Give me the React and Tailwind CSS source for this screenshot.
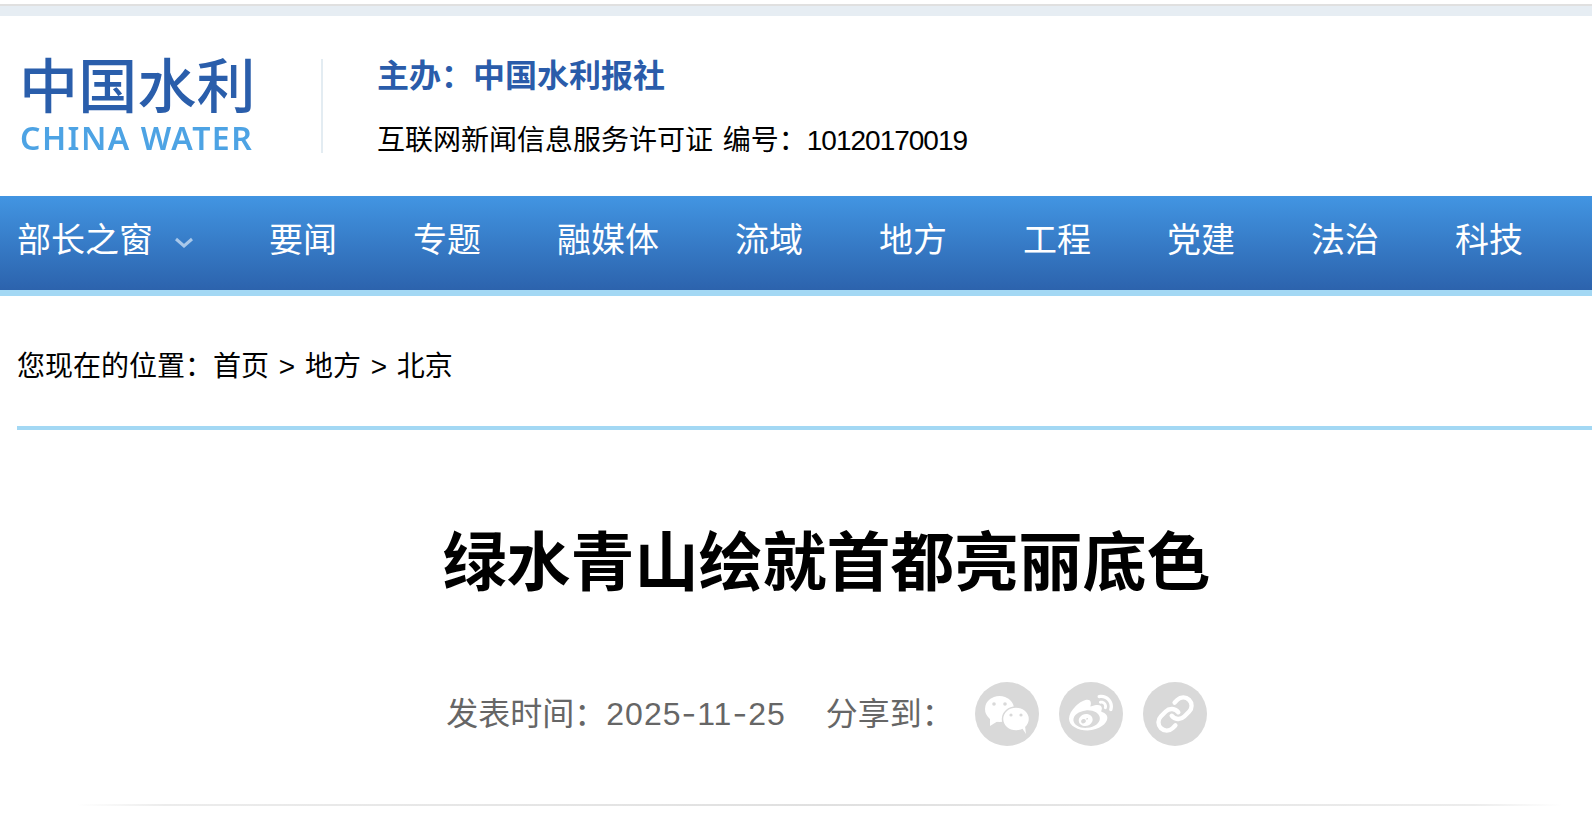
import React from "react";
import { Link } from "lucide-react";
import { FaWeibo } from "react-icons/fa";

const FONT = "font-['Liberation_Sans','Noto_Sans_CJK_SC',sans-serif]";
const NAV = ["要闻", "专题", "融媒体", "流域", "地方", "工程", "党建", "法治", "科技"];

function Logo() {
  return (
    <div className="w-[236px] h-[92px] flex flex-col blur-[0.4px]">
      <div className="h-[46px] leading-[46px] -ml-[1px] text-[59px] tracking-[0.2px] font-medium text-[#2a5eab] whitespace-nowrap font-['Noto_Sans_CJK_SC',sans-serif]">中国水利</div>
      <div className="mt-[19px] h-[26px] leading-[26px] text-[32px] tracking-[1.5px] font-semibold text-[#4da3e4] whitespace-nowrap font-['Noto_Sans',sans-serif]">CHINA WATER</div>
    </div>
  );
}

function WeChat() {
  return (
    <svg width="64" height="64" viewBox="0 0 64 64" className="block blur-[0.5px]">
      <ellipse cx="24.5" cy="27" rx="14.5" ry="13" fill="#fff" />
      <path d="M15 36l0 8 8-5z" fill="#fff" />
      <circle cx="19" cy="22" r="1.8" fill="#d9d9d9" />
      <circle cx="30" cy="22" r="1.8" fill="#d9d9d9" />
      <ellipse cx="41" cy="37" rx="13.5" ry="12" fill="#fff" stroke="#d9d9d9" strokeWidth="1.5" />
      <path d="M47 46l4 6-1-8z" fill="#fff" />
      <circle cx="36" cy="33" r="1.6" fill="#d9d9d9" />
      <circle cx="46" cy="33" r="1.6" fill="#d9d9d9" />
    </svg>
  );
}

export default function App() {
  const dash = <span className="font-['Inter',sans-serif]">-</span>;
  return (
    <div className={`w-full h-[834px] overflow-hidden bg-white ${FONT}`}>
      <div className="h-[4px] bg-white" />
      <div className="h-[2px] bg-[#e0e0e0]" />
      <div className="h-[10px] bg-[#e6edf3]" />

      <header className="h-[180px] bg-white flex items-center pl-[20px]">
        <Logo />
        <div className="ml-[65px] w-[2px] h-[94px] bg-[#e3ecf2] shrink-0" />
        <div className="ml-[54px] pt-[3px] flex flex-col">
          <div className="text-[32px] leading-[44px] font-bold text-[#2a5caa]">主办：中国水利报社</div>
          <div className="mt-[23px] text-[28px] leading-[40px] text-black whitespace-nowrap [word-spacing:2px]">
            互联网新闻信息服务许可证 编号：<span className="tracking-[-1px]">10120170019</span>
          </div>
        </div>
      </header>

      <nav className="h-[94px] flex items-center pl-[17px] pb-[5px] text-white text-[34px] bg-gradient-to-b from-[#4295e2] to-[#2c63ad]">
        <div className="w-[252px] shrink-0 flex items-center">
          <span>部长之窗</span>
          <svg width="20" height="12" viewBox="0 0 20 12" className="ml-[21px] mt-[5px] blur-[0.4px]" fill="none" stroke="#a9c8ea" strokeWidth="3">
            <path d="M2 2l8 7 8-7" />
          </svg>
        </div>
        {NAV.map((n) => (
          <span key={n} className="mr-[76px] shrink-0">{n}</span>
        ))}
      </nav>
      <div className="h-[6px] bg-[#a3d8f4]" />

      <div className="pl-[17px]">
        <div className="h-[130px] flex items-center text-[28px] text-black pt-[11px] whitespace-pre [word-spacing:2px]">您现在的位置：首页 &gt; 地方 &gt; 北京</div>
        <div className="h-[4px] bg-[#a3d8f4]" />
      </div>

      <main className="pl-[61px] flex flex-col items-center">
        <h1 className="mt-[95px] text-[64px] leading-[76px] font-bold text-black whitespace-nowrap">绿水青山绘就首都亮丽底色</h1>
        <div className="mt-[81px] h-[64px] flex items-center text-[32px] text-[#666]">
          <span>发表时间：</span>
          <span className="whitespace-nowrap tracking-[1px]">2025{dash}11{dash}25</span>
          <span className="ml-[40px]">分享到：</span>
          <div className="ml-[21px] flex gap-[20px]">
            <div className="w-[64px] h-[64px] rounded-full bg-[#d9d9d9] flex items-center justify-center"><WeChat /></div>
            <div className="w-[64px] h-[64px] rounded-full bg-[#d9d9d9] flex items-center justify-center text-white"><FaWeibo size={44} className="blur-[0.5px]" /></div>
            <div className="w-[64px] h-[64px] rounded-full bg-[#d9d9d9] flex items-center justify-center text-white"><Link size={40} strokeWidth={2.6} className="blur-[0.5px]" /></div>
          </div>
        </div>
      </main>

      <div className="mt-[58px] ml-[76px] w-[1487px] h-[2px] bg-[linear-gradient(to_right,transparent,#ececec_6%,#e0e0e0_50%,#ececec_94%,transparent)]" />
    </div>
  );
}
